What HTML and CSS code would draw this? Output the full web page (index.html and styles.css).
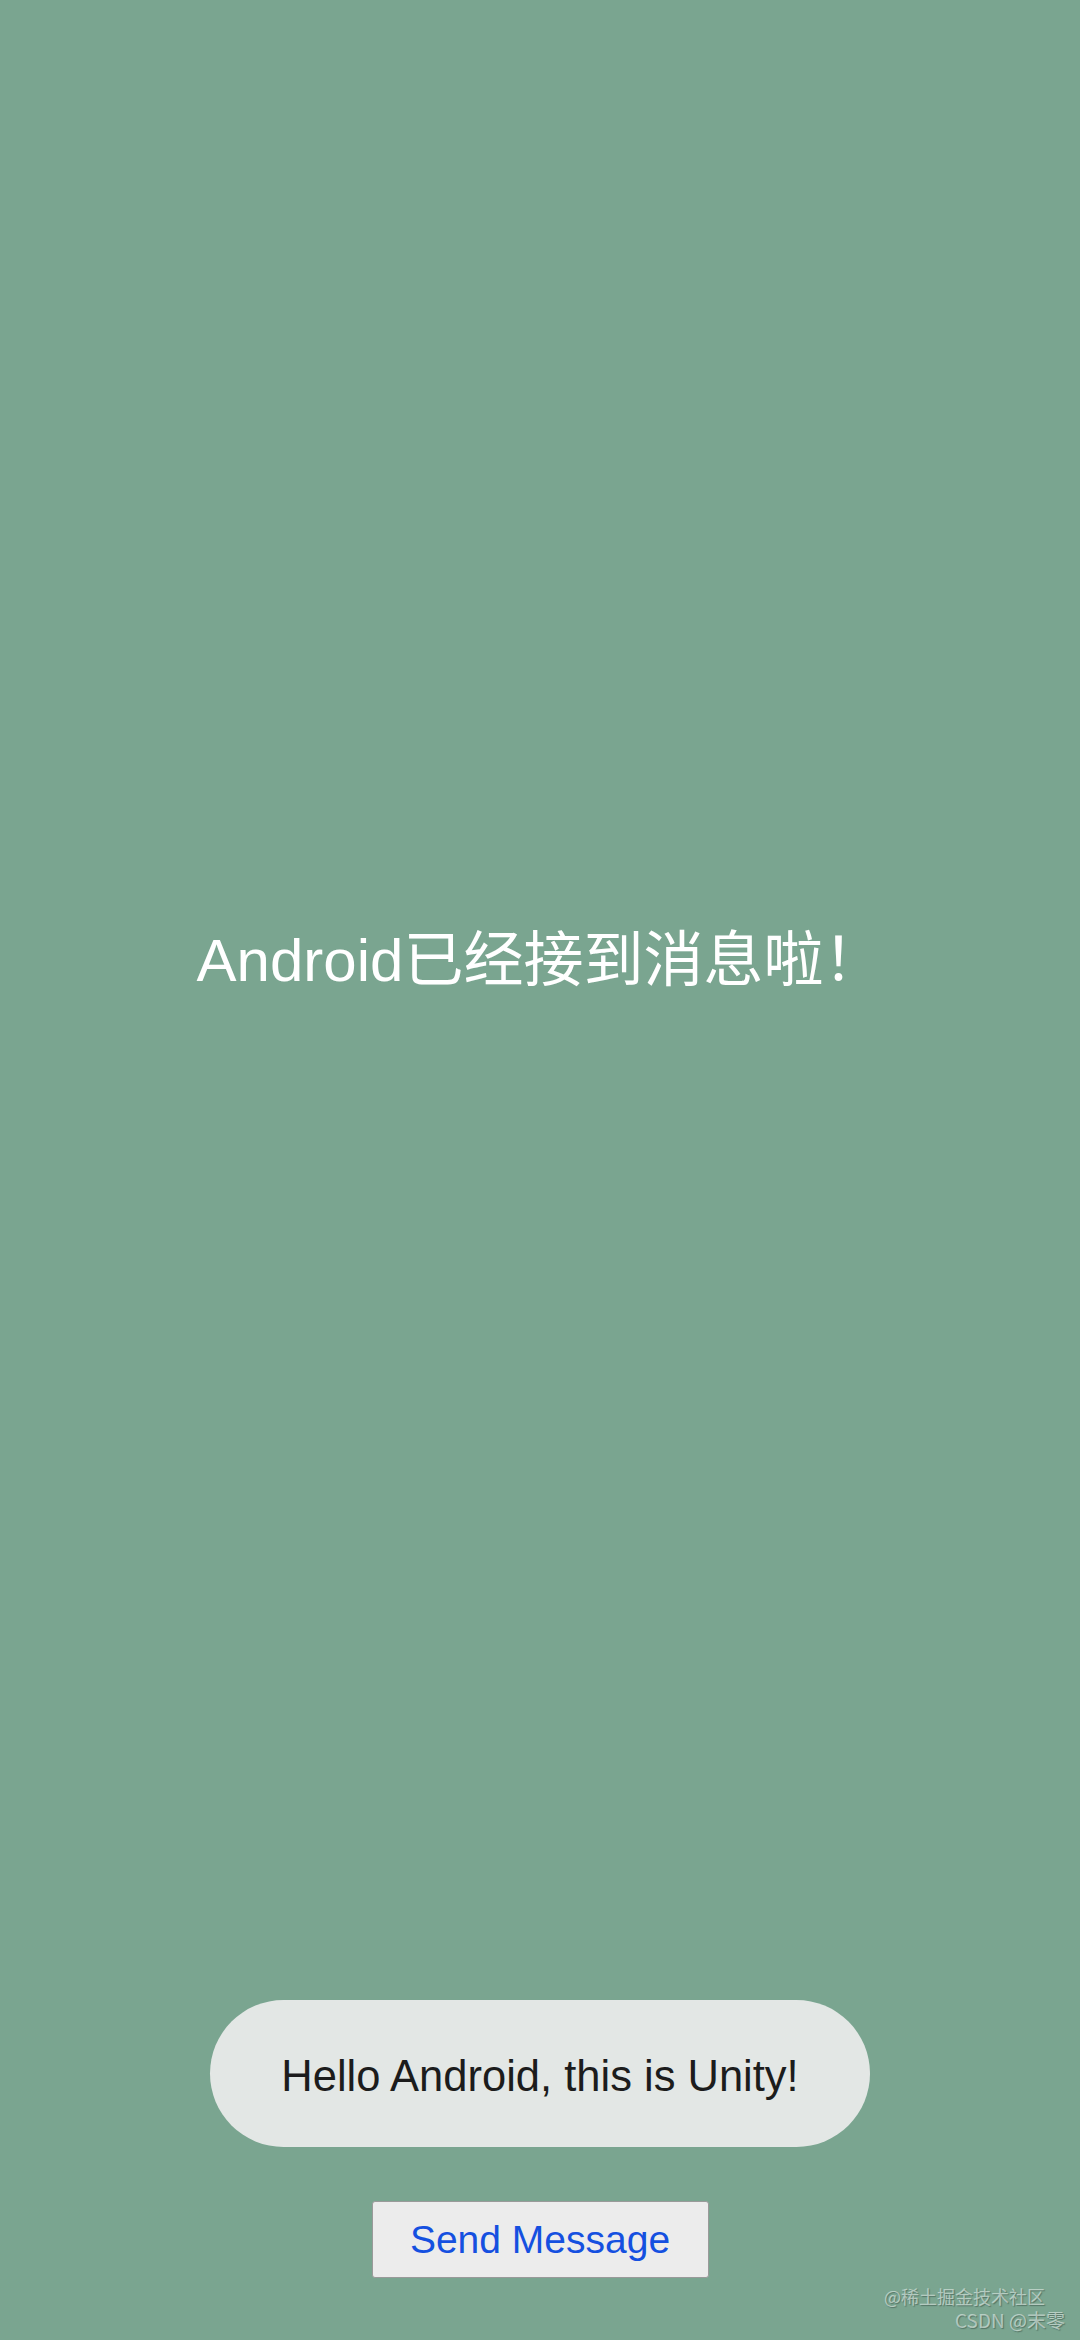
FILE: index.html
```html
<!DOCTYPE html>
<html lang="zh">
<head>
<meta charset="utf-8">
<title>Unity Android</title>
<link rel="stylesheet" href="styles.css">
</head>
<body>
<div class="screen">
  <div class="headline">Android已经接到消息啦！</div>
  <div class="spacer"></div>
  <div class="toast">Hello Android, this is Unity!</div>
  <button class="send-btn" type="button">Send Message</button>
  <div class="watermark">
    <div class="wm-line wm-first">@稀土掘金技术社区</div>
    <div class="wm-line wm-second">CSDN @末零</div>
  </div>
</div>
</body>
</html>
```

FILE: styles.css
```css
html, body {
  margin: 0;
  padding: 0;
}
body {
  width: 1080px;
  height: 2340px;
  overflow: hidden;
  background: #7aa590;
}
.screen {
  position: relative;
  width: 1080px;
  height: 2340px;
  display: flex;
  flex-direction: column;
  align-items: center;
  box-sizing: border-box;
  padding-bottom: 62px;
}
.headline {
  margin-top: 925px;
  font-family: "Liberation Sans", "Noto Sans CJK SC", sans-serif;
  font-size: 60px;
  line-height: 72px;
  color: #ffffff;
  white-space: nowrap;
}
.spacer {
  flex: 1;
}
.toast {
  width: 660px;
  height: 147px;
  box-sizing: border-box;
  padding-top: 6px;
  border-radius: 74px;
  background: #e3e7e5;
  display: flex;
  align-items: center;
  justify-content: center;
  font-family: "Liberation Sans", "Noto Sans CJK SC", sans-serif;
  font-size: 43.5px;
  color: #1c1c1c;
  white-space: nowrap;
}
.send-btn {
  margin-top: 54px;
  width: 337px;
  height: 77px;
  box-sizing: border-box;
  border: 1px solid #9a9a9a;
  border-radius: 3px;
  background: #ececec;
  font-family: "Liberation Sans", sans-serif;
  font-size: 39px;
  color: #1550e0;
  padding: 0;
  display: flex;
  align-items: center;
  justify-content: center;
}
.watermark {
  position: absolute;
  right: 15px;
  top: 2284px;
  text-align: right;
  font-family: "Noto Sans CJK SC", sans-serif;
  font-size: 18px;
  line-height: 24px;
  color: rgba(230, 240, 235, 0.6);
  text-shadow: 1px 1px 1px rgba(40, 60, 50, 0.45);
}
.wm-first {
  padding-right: 20px;
}
.wm-second {
  font-size: 19px;
}
```
